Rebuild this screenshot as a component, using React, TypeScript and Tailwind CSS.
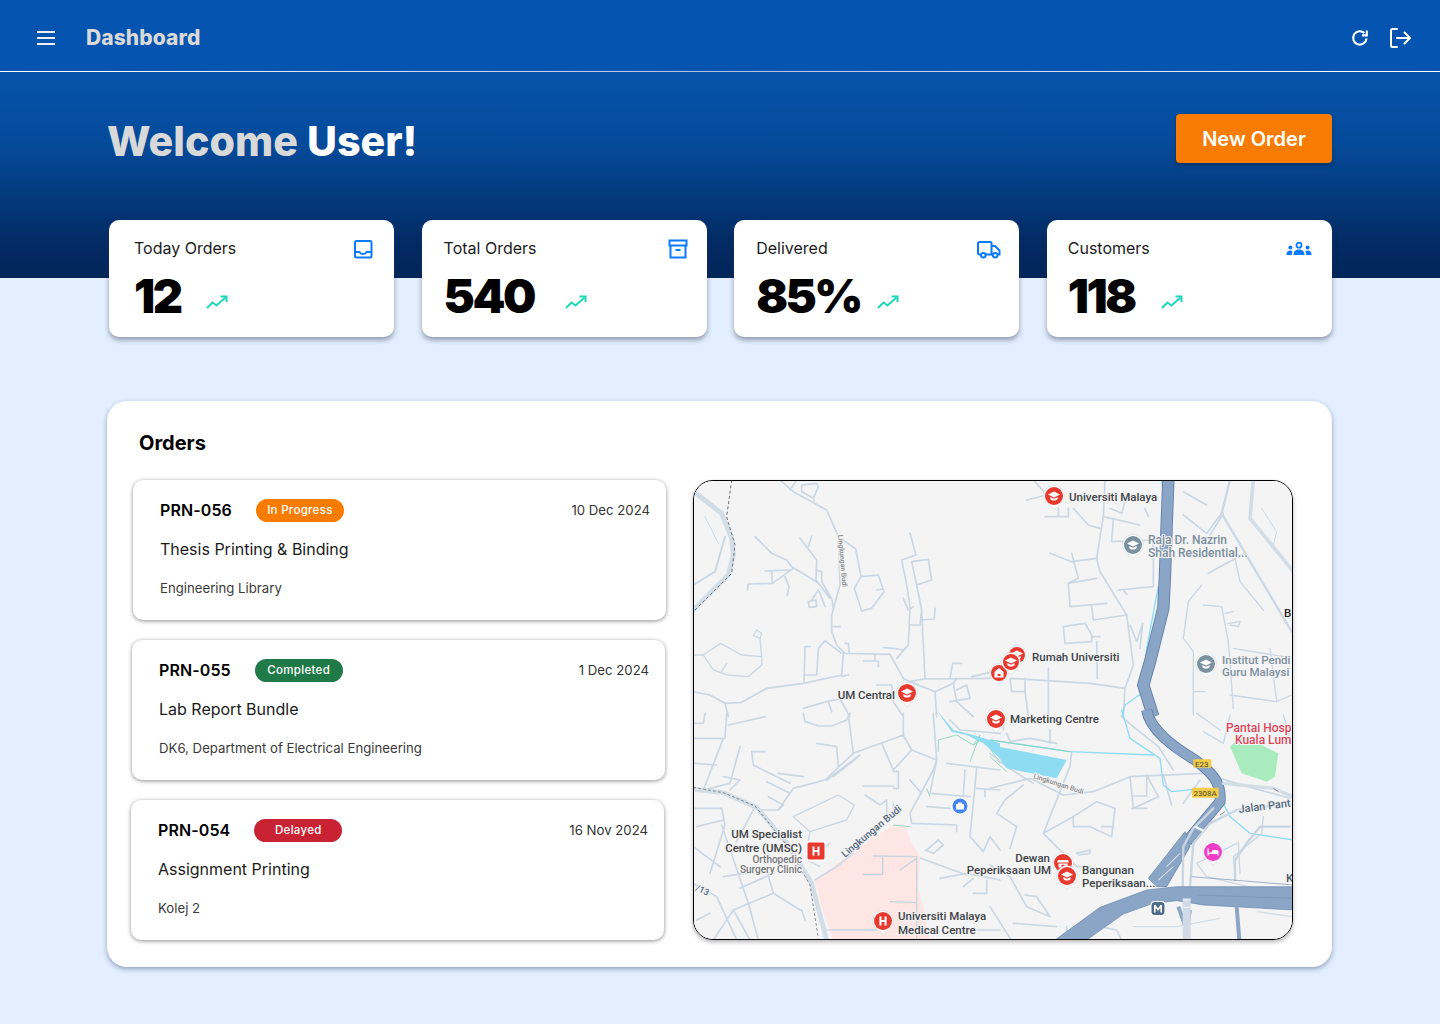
import React from "react";

const inter = "font-['Inter',sans-serif]";

const Trend = () => (
  <svg width="22" height="14" viewBox="0 0 22 14" fill="none" stroke="#1fd8b8" strokeWidth="2">
    <path d="M1 13 L6.5 7.5 L10.5 10.5 L19.5 2.5" />
    <path d="M14.5 1.5 H20.5 V7" />
  </svg>
);

const InboxIcon = () => (
  <svg width="20" height="20" viewBox="0 0 20 20" fill="none" stroke="#0a7bff" strokeWidth="2">
    <rect x="2" y="2" width="16.5" height="16.5" rx="1.5" />
    <path d="M2 13 H6.5 C7.5 15.5 12.5 15.5 13.5 13 H18.5" />
  </svg>
);

const ArchiveIcon = () => (
  <svg width="20" height="20" viewBox="0 0 20 20" fill="none" stroke="#0a7bff" strokeWidth="2">
    <rect x="1.5" y="1.5" width="17" height="5" />
    <path d="M2.5 6.5 V18.5 H17.5 V6.5" />
    <path d="M7.5 11 H12.5" />
  </svg>
);

const TruckIcon = () => (
  <svg width="24" height="18" viewBox="0 0 24 18" fill="none" stroke="#0a7bff" strokeWidth="2">
    <path d="M4 13.5 H2.5 A1.5 1.5 0 0 1 1 12 V2.5 A1.5 1.5 0 0 1 2.5 1 H13.5 A1 1 0 0 1 14.5 2 V13.5 H9" />
    <path d="M14.5 5 H18 L22.5 9.5 V13.5 H20.5" />
    <path d="M14.5 13.5 H16" />
    <circle cx="6.3" cy="14.2" r="2.3" />
    <circle cx="18.2" cy="14.2" r="2.3" />
  </svg>
);

const UsersIcon = () => (
  <svg width="26" height="14" viewBox="0 0 26 14" fill="#0a7bff">
    <circle cx="13" cy="3.2" r="2.5" fill="none" stroke="#0a7bff" strokeWidth="1.8" />
    <circle cx="4.4" cy="5.4" r="2" />
    <circle cx="21.6" cy="5.4" r="2" />
    <path d="M7.5 13 C7.5 9 10 7.6 13 7.6 S18.5 9 18.5 13 Z" />
    <path d="M0.4 13 C0.4 10 2 8.6 4.4 8.6 C5.4 8.6 6 8.8 6.6 9.2 C6 10.4 5.8 11.6 5.8 13 Z" />
    <path d="M25.6 13 C25.6 10 24 8.6 21.6 8.6 C20.6 8.6 20 8.8 19.4 9.2 C20 10.4 20.2 11.6 20.2 13 Z" />
  </svg>
);

const stats = [
  { label: "Today Orders", value: "12", icon: <InboxIcon />, px: "pl-[25px] pr-[21px]", gap: "gap-[25px]", iconBox: "mt-[1px]" },
  { label: "Total Orders", value: "540", icon: <ArchiveIcon />, px: "pl-[22px] pr-[19px]", gap: "gap-[31px]", iconBox: "mt-[1px]" },
  { label: "Delivered", value: "85%", icon: <TruckIcon />, px: "pl-[22px] pr-[18px]", gap: "gap-[16px]", iconBox: "mt-[3px]" },
  { label: "Customers", value: "118", icon: <UsersIcon />, px: "pl-[21px] pr-[20px]", gap: "gap-[26px]", iconBox: "mt-[4px]" },
];

const orders = [
  { id: "PRN-056", status: "In Progress", color: "bg-[#f97c02]", date: "10 Dec 2024", title: "Thesis Printing & Binding", place: "Engineering Library", offset: "ml-[26px] mr-0" },
  { id: "PRN-055", status: "Completed", color: "bg-[#1f7a47]", date: "1 Dec 2024", title: "Lab Report Bundle", place: "DK6, Department of Electrical Engineering", offset: "ml-[25px] mr-px" },
  { id: "PRN-054", status: "Delayed", color: "bg-[#c92233]", date: "16 Nov 2024", title: "Assignment Printing", place: "Kolej 2", offset: "ml-[24px] mr-[2px]" },
];

const R = ({ d, w = 5, c = "#cbd7e3" }: { d: string; w?: number; c?: string }) => (
  <path d={d} fill="none" stroke={c} strokeWidth={w} strokeLinejoin="round" strokeLinecap="round" />
);

type PinKind = "cap" | "home" | "shop" | "h" | "bed";
const Pin = ({ x, y, color = "#e8392f", kind = "cap", r = 9 }: { x: number; y: number; color?: string; kind?: PinKind; r?: number }) => (
  <g transform={`translate(${x} ${y})`}>
    <path d={`M${-r - 1.5} 0 A${r + 1.5} ${r + 1.5} 0 1 1 ${r + 1.5} 0 C${r + 1.5} 6 4 8 0 ${r + 4.5} C-4 8 ${-r - 1.5} 6 ${-r - 1.5} 0 Z`} fill="#fff" stroke="#bbb" strokeWidth="0.3" />
    <circle r={r} fill={color} />
    {kind === "cap" && (
      <g fill="#fff">
        <path d="M-6 -1.5 L0 -4.5 L6 -1.5 L0 1.5 Z" />
        <path d="M-3.6 1 L0 2.8 L3.6 1 V3.2 C2 5 -2 5 -3.6 3.2 Z" />
      </g>
    )}
    {kind === "home" && <path d="M0 -5 L4.5 -1 V4.5 H-4.5 V-1 Z M-1.5 1 V3 H1.5 V1 Z" fill="#fff" fillRule="evenodd" />}
    {kind === "shop" && <path d="M-5 -3 H5 L6 -0.5 H-6 Z M-4.5 0.5 H4.5 V4.5 H1.5 V1.8 H-1.5 V4.5 H-4.5 Z" fill="#fff" />}
    {kind === "bed" && <path d="M-5.5 -3.5 H-4.2 V0.5 H-1 V-2 H4 A1.5 1.5 0 0 1 5.5 -0.5 V3.5 H4.2 V2 H-4.2 V3.5 H-5.5 Z" fill="#fff" />}
    {kind === "h" && <path d="M-3.6 -4.5 H-1.5 V-1 H1.5 V-4.5 H3.6 V4.5 H1.5 V1 H-1.5 V4.5 H-3.6 Z" fill="#fff" />}
  </g>
);

const Label = ({ x, y, children, color = "#3f4347", size = 11.5, anchor = "start", rotate }: { x: number; y: number; children: string; color?: string; size?: number; anchor?: "start" | "end" | "middle"; rotate?: number }) => (
  <text
    x={x}
    y={y}
    fill={color}
    fontSize={size}
    textAnchor={anchor}
    fontFamily="Roboto, sans-serif"
    fontWeight={500}
    stroke="#f4f4f5"
    strokeWidth={2}
    paintOrder="stroke"
    transform={rotate !== undefined ? `rotate(${rotate} ${x} ${y})` : undefined}
  >
    {children}
  </text>
);

const MapPicture = () => (
  <svg viewBox="694 481 598 458" className="block h-full w-full" preserveAspectRatio="none">
    <rect x="694" y="481" width="598" height="458" fill="#f4f4f5" />

    {/* upper left quarter, coordinates taken at 3x */}
    <g transform="translate(690 475) scale(0.33333)">
      <R w={15} c="#d3dde6" d="M5,45 L95,115 L125,190 L130,240 L115,300 L5,410" />
      <R w={6} d="M10,330 L75,290 L105,185" />
      <R w={3} d="M45,125 L85,205" />
      <path d="M125,15 L110,125 L135,210 L125,295 L10,410" fill="none" stroke="#6b7076" strokeWidth="3" strokeDasharray="9 7" />
      <R d="M270,15 L310,50 L410,105 L445,185 L450,330 L425,420 L425,470 L440,510 L465,535 L600,538 L640,610" />
      <R d="M300,45 L320,15 M335,30 L380,25 L385,35 L370,70 L335,50 Z M370,70 L372,78" />
      <R d="M445,185 L497,222 L513,305 L565,300 L582,350 L545,400 L515,408 L493,340 L513,305 M560,345 L580,342" />
      <R d="M195,185 L245,235 L290,255 L305,275 L380,320 L420,365 M330,190 L380,255 L378,315 L420,370 M355,215 L365,183" />
      <R d="M225,288 L300,285 M245,288 L247,325 L175,327 L172,345 M247,325 L310,280 M285,305 L297,335 L292,362" />
      <R d="M378,285 L395,290 L395,320 L425,370 L430,400 M385,345 L365,375 M355,380 L378,375 L380,395 L358,397 Z M388,350 L405,395" />
      <R d="M12,540 L40,540 L92,505 L155,540 L215,545 L215,570 L175,605 L110,600 L70,585 L40,540 M110,565 L95,590 M215,545 L210,490 L190,482 L200,465 L215,475 L210,490" w={4} />
      <R d="M10,650 L60,660 L105,685 L155,682 L230,640 L340,625 L455,600 L460,535 M342,620 L345,515 L360,515 M345,600 L380,600 L385,520 L405,497 L455,535 M455,605 L475,600" />
      <R d="M105,685 L115,725 M425,455 L450,455 M465,505 L475,505 L478,535" />
      <R d="M660,175 L678,240 L635,255 L652,340 L660,395 L655,510 L620,550 M665,260 L715,253 L725,315 L680,330 L665,260 M680,330 L695,405 L705,610 M695,405 L690,450 L660,450 M695,435 L733,432 L735,400 M640,370 L655,405 L670,395" />
      <R d="M580,518 L610,520 L640,525 L655,510 M640,610 L660,620 L700,612 L900,610 M520,558 L565,558 L565,575 M555,540 L555,558 M780,610 L788,565 L815,565 M845,605 L910,590" />
      <R d="M660,620 L735,650 L790,625 L800,610 M735,650 L740,725 M790,625 L800,680 L850,725 M800,645 L830,630 L840,670 L780,680 M340,700 L410,680 L450,672 L480,725 M415,680 L425,710 M560,630 L605,630 L610,680 L640,725" />
    </g>

    {/* upper right quarter */}
    <g transform="translate(990 475) scale(0.33333)">
      <R d="M135,20 L170,60 L110,75 M165,125 L235,125 L235,100 M205,100 L205,125 M250,100 L295,150 L330,160 M345,15 L340,125 L320,250 L330,290 L410,420 L430,570 L405,640 L400,725" />
      <R d="M340,125 L450,150 M370,130 L365,200 L490,195 L490,335 L385,345 M400,345 L410,358 M180,235 L245,260 L320,250 M245,235 L265,310 L235,325 L240,395 L350,385 M235,325 L320,310 M305,395 L310,435 L410,420 M360,100 L395,115 L410,60 M465,100 L475,125" />
      <R d="M220,455 L285,445 L305,480 L305,500 L225,505 Z M305,485 L330,485 M420,450 L440,500 L458,445 L450,520 M175,580 L175,725 M60,610 L300,625 L405,640 M60,610 L65,650 L105,650 L105,610 M105,650 L115,725" />
      <R d="M320,500 L322,610" />
      <R w={7} d="M720,15 L695,115 L905,470" />
      <R w={5} d="M695,115 L650,175 L580,120 M580,50 L650,90 M700,115 L660,180 M655,295 L765,235" />
      <R w={11} c="#d3dde6" d="M790,15 L780,130 L910,290" />
      <R w={3} d="M815,100 L860,170 L850,210" />
      <R w={4} d="M635,330 L595,380 L580,490 L610,530 L610,720 M640,390 L695,395 L715,500 L730,700 M705,415 L730,410 M715,445 L750,440 L745,455 L720,450 M610,650 L645,650 M730,520 L910,550 M720,660 L860,680 L905,660 M840,520 L860,680 M735,250 L750,320 L820,405" />
      <R w={4} c="#8edcf2" d="M515,15 L520,60 M505,335 L470,520 L455,655 L405,690 L395,725" />
      <path d="M535,15 L530,150 L525,300 L520,400 L480,560 L460,630 L490,725" fill="none" stroke="#5d7ba8" strokeWidth="37" />
      <path d="M535,15 L530,150 L525,300 L520,400 L480,560 L460,630 L490,725" fill="none" stroke="#8aa5c5" strokeWidth="32" />
    </g>

    {/* lower left quarter */}
    <g transform="translate(690 710) scale(0.33333)">
      <R d="M10,85 L100,85 L40,240 M110,10 L105,85 M115,45 L225,20 M10,160 L80,165 M45,10 L40,40 L10,40 M150,110 L120,220 L40,240 M100,200 L150,210 L120,240" />
      <R d="M340,10 L345,35 L385,48 L425,48 L470,30 L480,10 M380,100 L440,110 L445,170 M475,15 L490,130 L405,210 L310,235 L265,300 L215,300 M490,130 L640,75 L665,120 L740,150 L730,180 L660,310 L665,340 L800,345 L800,365" />
      <R d="M185,125 L225,125 M185,125 L190,165 L300,220 M265,190 L340,200 M230,215 L300,250 M235,260 L280,285 L265,300 M410,210 L510,135 M430,200 L505,140" />
      <R w={4} d="M310,320 L445,255 L493,285 L470,330 L360,365 L310,320 M360,365 L350,420 M420,400 L350,450 L390,470" />
      <R d="M575,100 L610,180 L665,120 M610,185 L625,185 L625,235 L610,235 M660,210 L695,250 M520,228 L610,228 M525,255 L570,285 L590,270 L590,320 M610,280 L612,320 M740,150 L720,250 L840,260 M825,180 L820,255 M770,160 L930,180 M780,30 L810,60 L930,70 M730,10 L740,150 M640,10 L640,75" />
      <R d="M710,290 L780,295 M860,175 L840,380 L880,425 L900,380 L930,420 M860,235 L930,240 M885,240 L885,260 M710,420 L745,390 L760,405 L730,430 L705,420 M680,440 L830,495 M750,505 L830,490 L930,510 M850,550 L890,550 L890,510 M820,530 L850,505" />
      <R w={5} d="M410,660 L560,660 M930,660 L830,660 M100,330 L20,350 M10,295 L95,295 L105,345 L60,490 M95,345 L175,580 L205,690 M100,500 L230,480 L250,550 L130,600 L70,690 M130,600 L180,690 M150,535 L250,490 M250,550 L330,600 M10,410 L90,470 M10,520 L80,560 L140,690 M20,630 L60,610 M195,290 L140,395 M335,600 L345,630" />
      <R w={14} c="#d3dde6" d="M10,238 L100,248 L200,292 L295,405 L365,520 L410,690" />
      <path d="M10,232 L100,248 L195,288 L290,405 L360,525 L385,685" fill="none" stroke="#6b7076" strokeWidth="2.5" strokeDasharray="8 7" />
      <path d="M375,510 L435,465 L540,390 L610,345 L645,350 L665,400 L690,440 L685,535 L700,590 L720,690 L430,690 L395,590 Z" fill="#fde6e4" />
      <R w={5} d="M375,510 L440,470 L490,430" />
      <R w={4} c="#c7d4e0" d="M550,438 L680,440 M520,493 L578,493 L578,440 M630,480 L680,445 M680,440 L680,690 M600,575 L680,578 M420,660 L560,660 M630,620 L680,620" />
      <path d="M610,345 L660,350 M710,235 L720,260 M745,90 L800,75 L850,105 L870,75 M850,105 L880,85 L930,160 M870,75 L840,155 M745,90 L745,125" fill="none" stroke="#86d3b4" strokeWidth="2.5" />
      <path d="M740,0 L790,60 L850,75 L930,100 V145 L880,100 L830,75 L785,65 Z" fill="#8edcf2" />
    </g>

    {/* lower right quarter */}
    <g transform="translate(990 710) scale(0.33333)">
      <R d="M0,235 L40,225 L120,205 L220,255 L310,245 L420,200 L640,190 M100,225 L45,270 L20,310 L80,350 L60,415 M160,370 L250,320 L320,275 L375,295 L365,380 L300,350 L250,350 L250,320 M335,350 L370,350 M0,130 L50,170 L130,220 M245,125 L240,170 L160,370 L260,470 L300,470 M260,430 L300,420 L300,430 L265,435" />
      <R d="M50,70 L60,95 L120,85 L200,100 M180,60 L180,100 M40,30 L40,60 M420,200 L430,295 L505,260 L470,195 M425,258 L470,258 L470,200 M470,295 L425,295 M520,195 L545,285 M580,280 L630,210 M550,180 L505,110 L430,50 L395,20 M640,190 L740,220 L900,265" />
      <R d="M0,465 L60,500 L110,590 L180,620 L140,560 L105,555 M0,590 L70,700 M200,650 L70,640 M230,650 L230,700 M330,650 L380,660 L400,700" />
      <R d="M720,15 L700,100 L640,65 M620,10 L690,60 M880,15 L905,100 M740,400 L620,460 L650,500 L900,560 M745,395 L750,490 M820,320 L815,370 L730,440 L735,500" w={4} />
      <R w={4} c="#8edcf2" d="M395,0 L420,85 L510,145 L520,225 L545,245 L640,235 M690,260 L720,320 L780,370 L910,390" />
      <R w={4} c="#8edcf2" d="M0,90 L240,125 L490,135" />
      <path d="M0,105 L50,175 L200,205 L230,150 Z" fill="#8edcf2" />
      <path d="M0,90 L240,125 M0,140 L50,185" fill="none" stroke="#86d3b4" strokeWidth="2.5" />
      <path d="M720,110 L755,75 L865,130 L855,200 L830,215 L755,190 Z" fill="#a8ebbd" />
      <path d="M470,0 C480,60 550,110 615,150 C670,190 695,220 690,275 L640,335 L590,395" fill="none" stroke="#5d7ba8" strokeWidth="33" />
      <path d="M470,0 C480,60 550,110 615,150 C670,190 695,220 690,275 L640,335 L590,395" fill="none" stroke="#8aa5c5" strokeWidth="28" />
      <path d="M585,365 L475,505 L500,530 L530,530 L600,410 Z" fill="#8aa5c5" stroke="#5d7ba8" strokeWidth="2" />
      <path d="M530,470 L570,430 M505,510 L550,470" stroke="#f4f4f5" strokeWidth="3" />
      <R w={10} c="#d3dde6" d="M700,220 L850,235 L920,265" />
      <R w={7} c="#c9d5e0" d="M905,285 L820,290 L740,300 L660,340 L610,400 L600,530 M900,350 L810,350 L770,400 L735,450 L735,510 M670,295 L610,355 L580,410 L578,530" />
      <path d="M615,350 L640,362" stroke="#f4f4f5" strokeWidth="7" />
      <path d="M195,690 L330,592 L470,540 L560,530 L910,530 V600 L640,585 L560,572 L490,580 L400,612 L290,690 Z" fill="#8aa5c5" stroke="#6b87ae" strokeWidth="2" />
      <path d="M605,500 L910,525 M620,555 L910,565" fill="none" stroke="#7590b5" strokeWidth="2" />
      <path d="M740,590 L748,690 M565,590 L590,660 L600,600" fill="none" stroke="#8aa5c5" strokeWidth="12" />
      <path d="M430,650 L560,650 L690,625 M910,620 L800,605" fill="none" stroke="#d3dde6" strokeWidth="4" />
      <path d="M590,565 L590,690" fill="none" stroke="#cfdae4" strokeWidth="24" />
      <path d="M580,570 L602,570 M580,592 L602,592" stroke="#f4f4f5" strokeWidth="3" />
      <path d="M850,235 L865,245 M705,305 L690,315" stroke="#888" strokeWidth="3" />
      <rect x="610" y="148" width="54" height="25" rx="3" fill="#f4cc4a" />
      <rect x="606" y="233" width="80" height="30" rx="3" fill="#f4cc4a" />
    </g>

    <text x="1195" y="767" fontSize="8" fontFamily="Roboto, sans-serif" fill="#4a4a30">E23</text>
    <text x="1193.5" y="796" fontSize="8" fontFamily="Roboto, sans-serif" fill="#4a4a30">2308A</text>

    <Label x={1069} y={501}>Universiti Malaya</Label>
    <Label x={1148} y={544} color="#7d8f9d" size={12}>Raja Dr. Nazrin</Label>
    <Label x={1148} y={557} color="#7d8f9d" size={12}>Shah Residential...</Label>
    <Label x={1032} y={661}>Rumah Universiti</Label>
    <Label x={1222} y={664} color="#7d8f9d" size={11.5}>Institut Pendi</Label>
    <Label x={1222} y={676} color="#7d8f9d" size={11.5}>Guru Malaysi</Label>
    <Label x={895} y={699} anchor="end">UM Central</Label>
    <Label x={1010} y={723}>Marketing Centre</Label>
    <Label x={1226} y={732} color="#e0475a" size={12}>Pantai Hosp</Label>
    <Label x={1235} y={744} color="#e0475a" size={12}>Kuala Lum</Label>
    <Label x={1284} y={617} color="#222">B</Label>
    <Label x={1286} y={882} color="#4a5c6c">K</Label>
    <Label x={802} y={838} anchor="end">UM Specialist</Label>
    <Label x={802} y={852} anchor="end">Centre (UMSC)</Label>
    <Label x={802} y={863} anchor="end" color="#777" size={10}>Orthopedic</Label>
    <Label x={802} y={873} anchor="end" color="#777" size={10}>Surgery Clinic</Label>
    <Label x={1050} y={862} anchor="end">Dewan</Label>
    <Label x={1051} y={874} anchor="end">Peperiksaan UM</Label>
    <Label x={1082} y={874}>Bangunan</Label>
    <Label x={1082} y={887}>Peperiksaan...</Label>
    <Label x={898} y={920}>Universiti Malaya</Label>
    <Label x={898} y={934}>Medical Centre</Label>
    <Label x={1239} y={813} color="#55687d" size={11} rotate={-7}>Jalan Pant</Label>
    <Label x={845} y={858} color="#55687d" size={10} rotate={-40}>Lingkungan Budi</Label>
    <Label x={838} y={535} color="#888" size={7} rotate={85}>Lingkungan Budi</Label>
    <Label x={1033} y={778} color="#888" size={7} rotate={18}>Lingkungan Budi</Label>
    <Label x={695} y={890} color="#55687d" size={9} rotate={25}>/13</Label>

    <Pin x={1017} y={655} r={8} />
    <Pin x={999} y={673} r={8} kind="home" />
    <Pin x={1011} y={662} r={8} />
    <Pin x={1054} y={496} />
    <Pin x={1133} y={545} color="#7a919f" />
    <Pin x={1206} y={664} color="#7a919f" />
    <Pin x={907} y={693} />
    <Pin x={996} y={719} />
    <Pin x={1063} y={863} kind="shop" />
    <Pin x={1067} y={876} />
    <Pin x={883} y={921} kind="h" />
    <Pin x={1213} y={852} color="#f23cc6" kind="bed" />

    <g transform="translate(960 806)">
      <circle r="8.5" fill="#fff" />
      <circle r="7.5" fill="#4285f4" />
      <path d="M-4 -2 H-1.8 V-3.6 H1.8 V-2 H4 V3.6 H-4 Z" fill="#fff" />
    </g>
    <g>
      <rect x="806" y="841" width="20" height="20" rx="2" fill="#fff" />
      <rect x="807.5" y="842.5" width="17" height="17" rx="1.5" fill="#e8392f" />
      <path d="M812.5 846.5 H814.5 V850 H817.5 V846.5 H819.5 V855.5 H817.5 V852 H814.5 V855.5 H812.5 Z" fill="#fff" />
    </g>
    <g>
      <rect x="1150.5" y="901" width="15" height="15" rx="4" fill="#fff" />
      <rect x="1151.5" y="902" width="13" height="13" rx="3.5" fill="#4f6a86" />
      <path d="M1154 912.5 V905 H1155.6 L1158 908.4 L1160.4 905 H1162 V912.5 H1160.4 V907.8 L1158 911 L1155.6 907.8 V912.5 Z" fill="#fff" />
    </g>
  </svg>
);

export default function App() {
  return (
    <div className={`min-h-[1024px] bg-[#e3effe] ${inter} text-black`}>
      <header className="relative flex h-[72px] items-center justify-between bg-[#0554b0] pl-[36px] pr-[29px] pt-[4px]">
        <div className="flex items-center gap-[30px]">
          <svg width="20" height="16" viewBox="0 0 20 16" fill="none" stroke="#f0f0f0" strokeWidth="2">
            <path d="M1 2 H19 M1 8 H19 M1 14 H19" />
          </svg>
          <span className="-mt-[1px] text-[21px] font-extrabold leading-none tracking-[0.1px] text-[#d9d9d9]">Dashboard</span>
        </div>
        <div className="flex items-center gap-[19px]">
          <svg width="20" height="20" viewBox="0 0 20 20" fill="none" stroke="#fff" strokeWidth="2.1">
            <path d="M16.5 10.5 A6.7 6.7 0 1 1 14.4 5" />
            <path d="M16.8 2.5 V7.4 H12" />
          </svg>
          <svg width="22" height="22" viewBox="0 0 22 22" fill="none" stroke="#fff" strokeWidth="2" strokeLinecap="round" strokeLinejoin="round">
            <path d="M8 2 H3.5 A1.5 1.5 0 0 0 2 3.5 V18.5 A1.5 1.5 0 0 0 3.5 20 H8" />
            <path d="M8 11 H20.5 M15.5 5.5 L21 11 L15.5 16.5" />
          </svg>
        </div>
        <div className="absolute bottom-0 left-0 right-0 h-[1.5px] bg-[linear-gradient(90deg,#ffffff,#a9c0e2_50%,#ffffff)]" />
      </header>

      <section className="h-[206px] bg-[linear-gradient(180deg,#0554ac_0%,#054a9a_35%,#032a62_85%,#03265a_100%)] pl-[107px] pr-[108px] pt-[42px]">
        <div className="flex items-start justify-between">
          <h1 className="mt-[1px] text-[41.2px] font-extrabold leading-[52px]">
            <span className="text-[#d9d9d9]">Welcome</span> <span className="text-white">User!</span>
          </h1>
          <button className="h-[49px] w-[156px] rounded-[4px] bg-[#f97c02] text-[20px] font-semibold text-white shadow-[0_2px_4px_rgba(0,0,0,0.3)]">
            New Order
          </button>
        </div>
      </section>

      <div className="relative -mt-[58px] ml-[109px] mr-[108px] grid grid-cols-4 gap-x-[27.33px]">
        {stats.map((s) => (
          <div key={s.label} className={`h-[117px] rounded-[10px] bg-white pt-[18px] shadow-[0_3px_5px_rgba(40,50,80,0.45)] ${s.px}`}>
            <div className="flex items-start justify-between">
              <span className="text-[16px] leading-[21px] text-[#1b1b1b]">{s.label}</span>
              <span className={s.iconBox}>{s.icon}</span>
            </div>
            <div className={`mt-[12px] flex items-center ${s.gap}`}>
              <span className="text-[47px] font-black leading-[50px] tracking-[-2.5px]">{s.value}</span>
              <span className="mt-[11px]"><Trend /></span>
            </div>
          </div>
        ))}
      </div>

      <main className="ml-[107px] mr-[108px] mt-[64px] h-[566px] rounded-[20px] bg-white pr-[39px] pt-[28px] shadow-[0_2px_5px_rgba(40,60,110,0.45)]">
        <h2 className="ml-[32px] text-[20px] font-bold leading-[28px]">Orders</h2>
        <div className="mt-[23px] flex">
          <div className="flex w-[559px] flex-col gap-[20px]">
            {orders.map((o) => (
              <div key={o.id} className={`h-[140px] rounded-[10px] bg-white pl-[27px] pr-[16px] pt-[18px] shadow-[0_1px_4px_rgba(0,0,0,0.45)] ${o.offset}`}>
                <div className="flex h-[24px] items-center justify-between">
                  <div className="flex items-center gap-[24px]">
                    <span className="text-[16px] font-semibold tracking-[0.1px]">{o.id}</span>
                    <span className={`flex h-[23px] w-[88px] items-center justify-center rounded-full pt-[2px] text-[11.5px] font-medium tracking-[0.3px] text-white ${o.color}`}>{o.status}</span>
                  </div>
                  <span className="pt-[1px] text-[13.2px] text-[#333]">{o.date}</span>
                </div>
                <div className="mt-[15px] text-[16px] leading-[24px] text-[#1b1b1b]">{o.title}</div>
                <div className="mt-[15px] text-[13.2px] leading-[24px] text-[#3a3a3a]">{o.place}</div>
              </div>
            ))}
          </div>
          <div className="ml-[27px] h-[460px] w-[600px] overflow-hidden rounded-[20px] border border-black shadow-[0_2px_4px_rgba(0,0,0,0.3)]">
            <MapPicture />
          </div>
        </div>
      </main>
    </div>
  );
}
